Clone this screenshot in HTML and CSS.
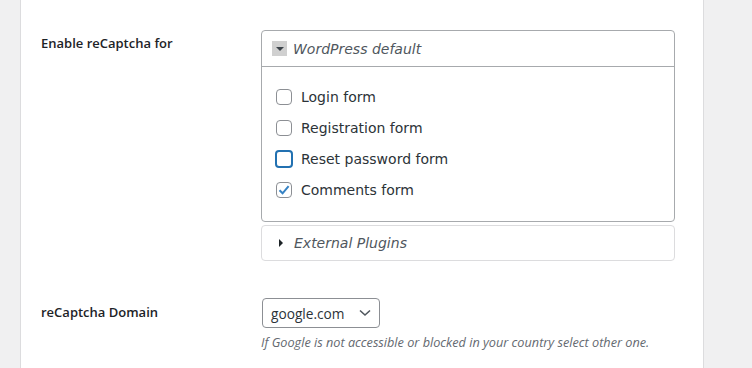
FILE: index.html
```html
<!DOCTYPE html>
<html lang="en">
<head>
    <meta charset="UTF-8">
    <title>reCaptcha Settings</title>
    <link rel="stylesheet" href="styles.css">
</head>
<body>
    <div class="panel">
        <div class="form-row">
            <div class="field-label">Enable reCaptcha for</div>
            <div class="field-value">
                <div class="group open">
                    <div class="group-head">
                        <span class="toggle-box"><span class="tri-down"></span></span>
                        <span class="group-title">WordPress default</span>
                    </div>
                    <div class="group-body">
                        <label class="check"><span class="box"></span>Login form</label>
                        <label class="check"><span class="box"></span>Registration form</label>
                        <label class="check"><span class="box focus"></span>Reset password form</label>
                        <label class="check"><span class="box checked">
                            <svg width="12" height="12" viewBox="0 0 12 12"><path d="M1.5 6.2 L4.6 9.3 L10.6 2.2" fill="none" stroke="#3582c4" stroke-width="2"/></svg>
                        </span>Comments form</label>
                    </div>
                </div>
                <div class="group closed">
                    <div class="group-head">
                        <span class="tri-right"></span>
                        <span class="group-title">External Plugins</span>
                    </div>
                </div>
            </div>
        </div>

        <div class="form-row domain-row">
            <div class="field-label">reCaptcha Domain</div>
            <div class="field-value">
                <div class="select">
                    <span>google.com</span>
                    <svg width="12" height="8" viewBox="0 0 12 8"><path d="M1 1.5 L6 6 L11 1.5" fill="none" stroke="#50575e" stroke-width="1.6"/></svg>
                </div>
                <p class="help">If Google is not accessible or blocked in your country select other one.</p>
            </div>
        </div>
    </div>
</body>
</html>
```

FILE: styles.css
```css
body {
    margin: 0;
    background: #f0f0f1;
    font-family: "DejaVu Sans", Verdana, sans-serif;
    font-size: 14px;
    color: #1d2327;
}

.panel {
    margin-left: 20px;
    width: 684px;
    height: 368px;
    background: #fff;
    border-left: 1px solid #dcdcde;
    border-right: 1px solid #dcdcde;
    padding: 30px 0 0 20px;
    box-sizing: border-box;
}

.form-row {
    display: flex;
}

.field-label {
    width: 220px;
    flex-shrink: 0;
    font-family: "Open Sans", sans-serif;
    font-weight: 600;
    font-size: 13px;
    padding-top: 3px;
    line-height: 20px;
}

.field-value {
    width: 414px;
}

.group {
    border-radius: 4px;
    background: #fff;
}

.group.open {
    border: 1px solid #a7aaad;
}

.group.closed {
    border: 1px solid #dcdcde;
    margin-top: 3px;
}

.group-head {
    display: flex;
    align-items: center;
    height: 35px;
    padding-left: 10px;
}

.group.open .group-head {
    border-bottom: 1px solid #a7aaad;
}

.group.closed .group-head {
    height: 34px;
    padding-left: 17px;
}

.toggle-box {
    width: 15px;
    height: 15px;
    background: #d0d0d0;
    display: flex;
    align-items: center;
    justify-content: center;
    margin-right: 6px;
}

.tri-down {
    width: 0;
    height: 0;
    border-left: 4px solid transparent;
    border-right: 4px solid transparent;
    border-top: 4px solid #3c434a;
}

.tri-right {
    width: 0;
    height: 0;
    border-top: 4px solid transparent;
    border-bottom: 4px solid transparent;
    border-left: 4px solid #1d2327;
    margin-right: 11px;
}

.group-title {
    font-style: italic;
    color: #50575e;
}

.group-body {
    padding: 14px 0 16px 14px;
}

.check {
    display: flex;
    align-items: center;
    height: 31px;
    color: #2c3338;
}

.box {
    width: 16px;
    height: 16px;
    box-sizing: border-box;
    border: 1px solid #8c8f94;
    border-radius: 4px;
    margin-right: 9px;
    display: flex;
    align-items: center;
    justify-content: center;
}

.box.focus {
    border: 2px solid #2271b1;
    width: 18px;
    height: 18px;
    margin-left: -1px;
    margin-right: 8px;
}

.domain-row {
    margin-top: 37px;
}

.domain-row .field-label {
    padding-top: 4px;
}

.select {
    width: 118px;
    height: 30px;
    box-sizing: border-box;
    border: 1px solid #8c8f94;
    border-radius: 4px;
    display: flex;
    align-items: center;
    justify-content: space-between;
    padding: 0 8px 0 8px;
    margin-left: 1px;
    font-family: "Open Sans", sans-serif;
    font-size: 13.7px;
    color: #2c3338;
}

.help {
    margin: 5px 0 0 0;
    font-family: "Open Sans", sans-serif;
    font-style: italic;
    font-size: 12.7px;
    color: #646970;
}
```
